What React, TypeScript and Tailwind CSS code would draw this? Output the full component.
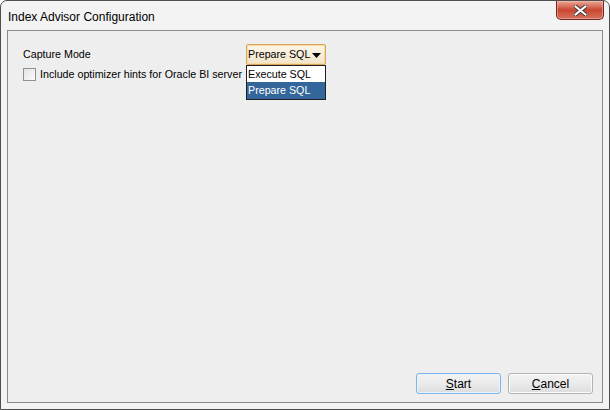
export default function App() {
  return (
    <div className="w-[610px] h-[410px] bg-white font-['Liberation_Sans',Arial,sans-serif]">
      <div className="w-full h-full flex flex-col rounded-t-[7px] border border-[#4f4f4f] bg-[#f3f3f3] px-[6px] pb-[6px]">
        {/* title bar */}
        <div className="relative h-[29px] shrink-0">
          <span className="absolute left-[1px] top-[7px] text-[12px] text-black">
            Index Advisor Configuration
          </span>
          <button className="absolute right-[-1px] top-0 w-[48px] h-[19px] rounded-b-[5px] border border-t-0 border-[#6b2a22] bg-gradient-to-b from-[#e9a898] via-[#c9452f] to-[#d4715c] flex items-center justify-center shadow-[inset_0_0_0_1px_rgba(255,200,190,0.45)]">
            <svg width="13" height="11" viewBox="0 0 13 11">
              <path
                d="M1.5 1.5 L11.5 9.5 M11.5 1.5 L1.5 9.5"
                stroke="#3a3a3a"
                strokeWidth="4"
                strokeLinecap="square"
              />
              <path
                d="M1.5 1.5 L11.5 9.5 M11.5 1.5 L1.5 9.5"
                stroke="#ffffff"
                strokeWidth="2"
                strokeLinecap="square"
              />
            </svg>
          </button>
        </div>

        {/* content */}
        <div className="relative flex-1 flex flex-col border border-[#8a8a8a] bg-[#eeeeee] text-[10.7px] text-black">
          <div className="flex flex-col pl-[15px] pt-[13px]">
            <div className="flex items-center h-[21px]">
              <span className="w-[223px]">Capture Mode</span>
              <div className="relative w-[80px] h-[21px] rounded-[2px] border border-[#d9a35a] bg-gradient-to-b from-[#fdf6e8] to-[#f1e4c9] shadow-[inset_0_0_0_1px_#f8dba5] flex items-center pl-[1px]">
                <span>Prepare SQL</span>
                <svg className="absolute right-[4px] top-[8px]" width="9" height="5" viewBox="0 0 9 5">
                  <path d="M0 0 H9 L4.5 5 Z" fill="#000" />
                </svg>
                {/* popup list */}
                <div className="absolute left-[-1px] top-[20px] w-[80px] border border-[#1f1f1f] bg-white z-10">
                  <div className="h-[16px] flex items-center pl-[1px] bg-white">Execute SQL</div>
                  <div className="h-[17px] flex items-center pl-[1px] bg-[#33669a] text-white">Prepare SQL</div>
                </div>
              </div>
            </div>
            <div className="flex items-center gap-[4px] mt-[2px] h-[15px]">
              <div className="w-[13px] h-[13px] border border-[#8f8f8f] bg-gradient-to-br from-[#e4e4e4] to-[#fbfbfb]" />
              <span>Include optimizer hints for Oracle BI server</span>
            </div>
          </div>

          <div className="mt-auto flex justify-end gap-[7px] pr-[9px] pb-[8px]">
            <button className="w-[85px] h-[21px] rounded-[3px] border border-[#7eb4ea] bg-gradient-to-b from-[#f2f2f2] via-[#ebebeb] to-[#dddddd] text-[12px] shadow-[inset_0_0_0_1px_#e8f3fd]">
              <span className="underline">S</span>tart
            </button>
            <button className="w-[85px] h-[21px] rounded-[3px] border border-[#b3b3b3] bg-gradient-to-b from-[#f2f2f2] via-[#ebebeb] to-[#dddddd] text-[12px] shadow-[inset_0_0_0_1px_#fbfbfb]">
              <span className="underline">C</span>ancel
            </button>
          </div>
        </div>
      </div>
    </div>
  );
}
